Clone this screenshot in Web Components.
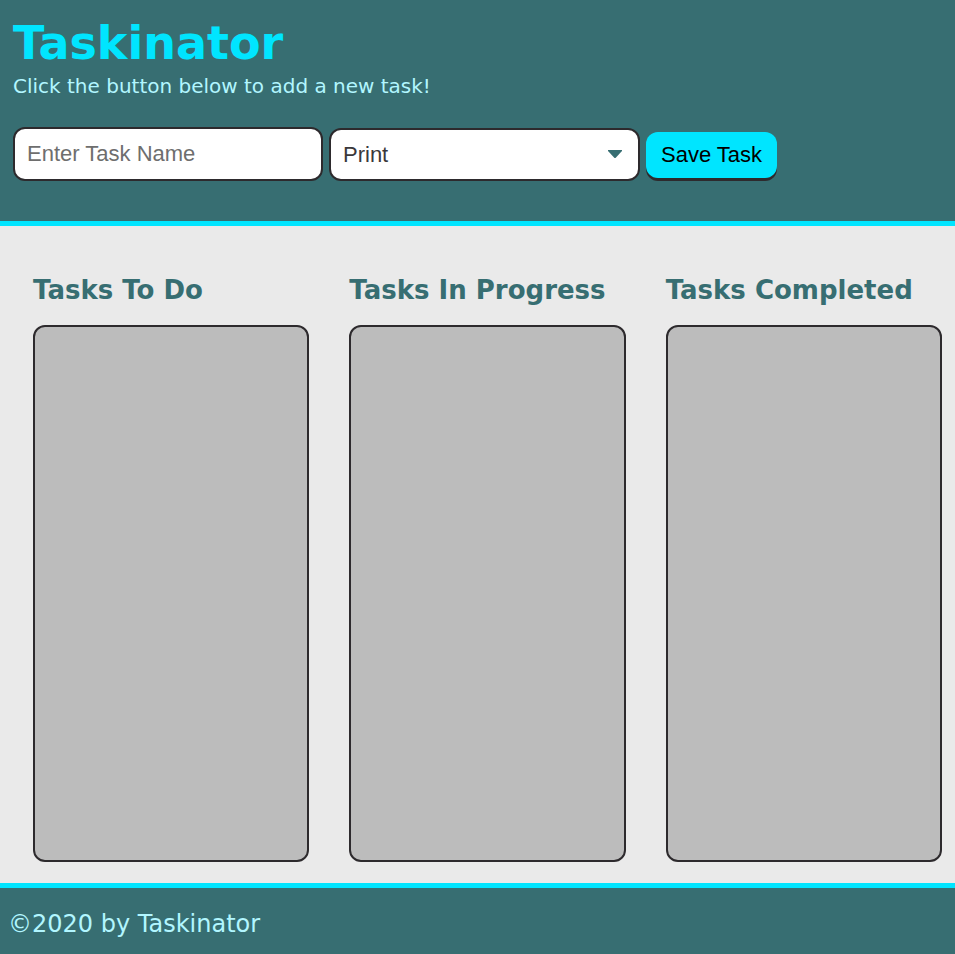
<!DOCTYPE html>
<html lang="en">
<head>
<meta charset="utf-8">
<meta name="viewport" content="width=device-width, initial-scale=1">
<title>Taskinator</title>
<style>
  html {
    --teal: #376e72;
    --cyan: #00e5ff;
    --pale: #b2f6ff;
    --ink: #2d2a2d;
    --grey: #bcbcbc;
  }
  body {
    margin: 0;
    background: #eaeaea;
    color: var(--ink);
    font-family: Verdana, "DejaVu Sans", sans-serif;
  }
</style>
</head>
<body>
<task-app></task-app>

<script>
  const define = (name, html) => {
    const template = document.createElement('template');
    template.innerHTML = html;
    customElements.define(name, class extends HTMLElement {
      constructor() {
        super();
        this.attachShadow({ mode: 'open' }).append(template.content.cloneNode(true));
      }
    });
  };

  define('task-header', `
    <style>
      :host {
        display: block;
        padding: 15px 13px 40px;
        background: var(--teal);
        border-bottom: 5px solid var(--cyan);
      }
      h1 { margin: 0 0 1px; color: var(--cyan); font-size: 46px; line-height: 56px; font-weight: 700; }
      p { margin: 0 0 27px; color: var(--pale); font-size: 20px; line-height: 28px; }
    </style>
    <h1><slot name="title"></slot></h1>
    <p><slot name="tagline"></slot></p>
    <slot></slot>
  `);

  define('task-form', `
    <style>
      :host { display: block; }
      form { display: flex; flex-wrap: wrap; align-items: flex-end; gap: 6px; }
      input, select, button {
        box-sizing: border-box;
        margin: 0;
        border-radius: 12px;
        font-family: Arial, "Liberation Sans", sans-serif;
        font-size: 22px;
        line-height: 26px;
      }
      input, .pick select {
        width: 100%;
        border: 2px solid var(--ink);
        background: #fff;
        color: #3a383a;
        padding: 12px;
      }
      .field { flex: 0 1 310px; display: grid; }
      .pick { flex: 0 1 311px; display: grid; align-items: center; }
      input { height: 54px; }
      input::placeholder { color: #6e6e6e; opacity: 1; }
      .pick > * { grid-area: 1 / 1; }
      .pick select { appearance: none; height: 53px; padding: 0 40px 0 12px; }
      .pick svg { justify-self: end; margin-right: 18px; pointer-events: none; fill: var(--teal); }
      button {
        height: 46px;
        margin-bottom: 3px;
        padding: 0 15px;
        border: 0;
        background: var(--cyan);
        color: #000;
        box-shadow: 0 3px 0 var(--ink);
      }
    </style>
    <form>
      <div class="field"><input type="text" name="task-name" placeholder="Enter Task Name" aria-label="Task name"></div>
      <div class="pick">
        <select name="task-type" aria-label="Task type">
          <option selected>Print</option>
          <option>Web</option>
          <option>Mobile App</option>
        </select>
        <svg width="14" height="10" viewBox="0 0 14 10" aria-hidden="true"><path d="M0 0h14v1L7.5 8h-1L0 1z"/></svg>
      </div>
      <button type="submit">Save Task</button>
    </form>
  `);

  define('task-board', `
    <style>
      :host {
        flex: 1;
        display: grid;
        grid-template-columns: repeat(3, minmax(0, 1fr));
        gap: 40px;
        padding: 46px 13px 21px 33px;
      }
    </style>
    <slot></slot>
  `);

  define('task-column', `
    <style>
      :host { display: flex; flex-direction: column; gap: 17px; }
      h2 { margin: 0; color: var(--teal); font-size: 26px; line-height: 36px; font-weight: 700; }
      ul {
        flex: 1;
        box-sizing: border-box;
        margin: 0;
        padding: 10px;
        list-style: none;
        border: 2px solid var(--ink);
        border-radius: 12px;
        background: var(--grey);
      }
    </style>
    <h2><slot></slot></h2>
    <ul></ul>
  `);

  define('task-footer', `
    <style>
      :host {
        display: block;
        padding: 21px 8px 15px;
        background: var(--teal);
        border-top: 5px solid var(--cyan);
        color: var(--pale);
        font-size: 24px;
        line-height: 30px;
      }
    </style>
    <slot></slot>
  `);

  define('task-app', `
    <style>
      :host { display: flex; flex-direction: column; min-height: 100vh; }
      main { flex: 1; display: flex; }
    </style>
    <task-header>
      <span slot="title">Taskinator</span>
      <span slot="tagline">Click the button below to add a new task!</span>
      <task-form></task-form>
    </task-header>
    <main>
      <task-board>
        <task-column>Tasks To Do</task-column>
        <task-column>Tasks In Progress</task-column>
        <task-column>Tasks Completed</task-column>
      </task-board>
    </main>
    <task-footer>©2020 by Taskinator</task-footer>
  `);
</script>
</body>
</html>
